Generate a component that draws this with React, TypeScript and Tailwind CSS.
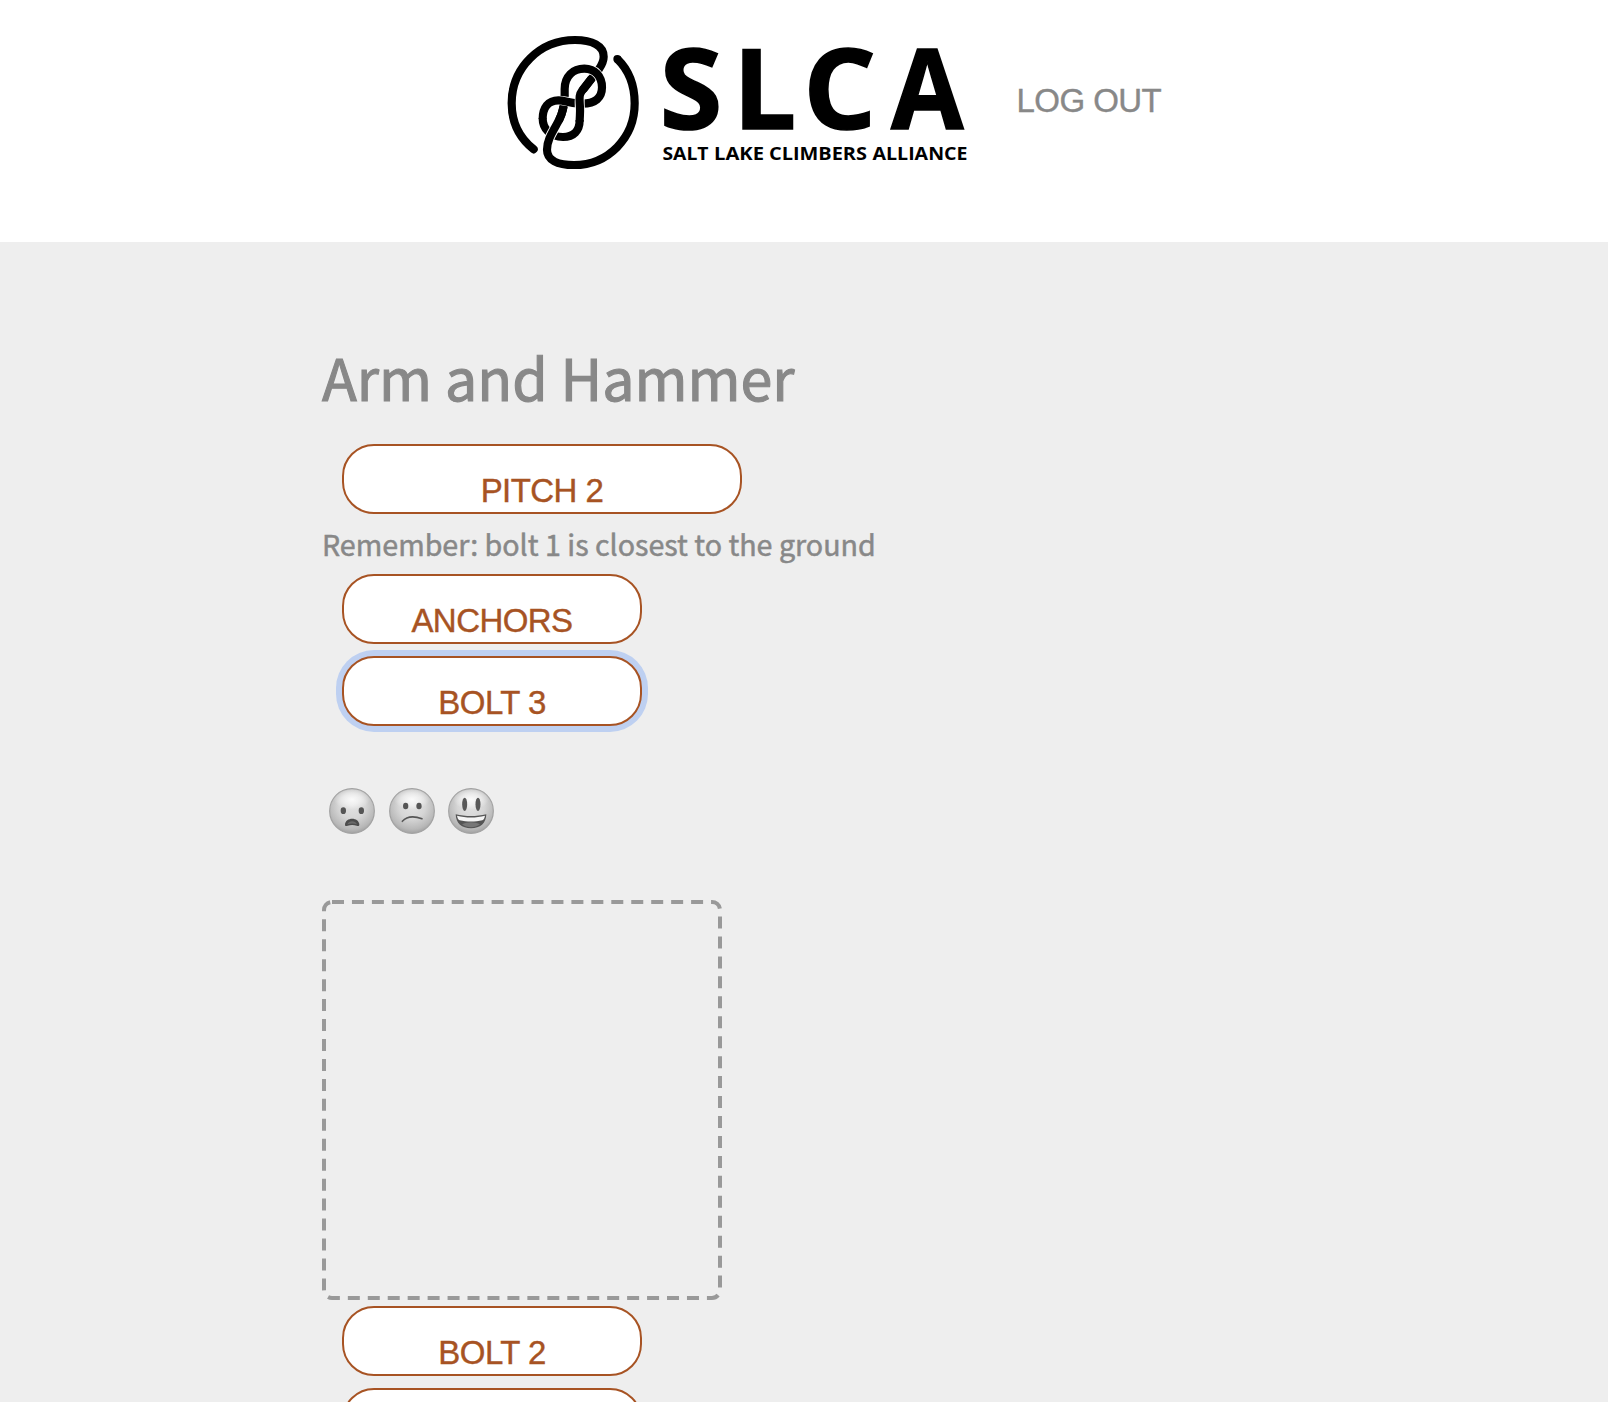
import React from "react";

function KnotMark() {
  return (
    <svg className="h-[155px] w-[160px] shrink-0" viewBox="0 0 480 465" fill="none" stroke="#000" strokeWidth="24.5">
      <path d="M116 373C74 340 50 292 50 235C50 128 134 45 240 45C292 45 326 62 326 95C326 108 320 120 312 132L266 192" strokeLinecap="round" />
      <path d="M254 285C254 318 236 336 204 336C166 336 143 312 143 280" />
      <path d="M209 205C209 240 203 264 192 286" />
      <path d="M209 212V192C209 154 234 131 268 131C300 131 321 154 321 187C321 218 302 236 262 236" stroke="#fff" strokeWidth="29" />
      <path d="M209 214V192C209 154 234 131 268 131C300 131 321 154 321 187C321 218 302 236 262 236" />
      <path d="M178 228C202 223 220 234 246 235" stroke="#fff" strokeWidth="30" />
      <path d="M143 282C143 248 160 226 190 226C208 226 224 234 246 235" />
      <path d="M257 208C252 218 254 232 255 262" stroke="#fff" strokeWidth="30" />
      <path d="M290 160L262 196C250 212 254 222 255 250C256 264 254 274 254 290" />
      <path d="M184 300C176 316 166 330 160 348" stroke="#fff" strokeWidth="30" />
      <path d="M206 242C203 264 196 280 184 300C166 332 156 350 156 374C156 404 186 420 237 420C340 420 419 338 419 235C419 182 400 134 367 102" />
      <circle cx="367" cy="102" r="12" fill="#000" stroke="none" />
    </svg>
  );
}

function Logo() {
  return (
    <div className="flex">
      <KnotMark />
      <svg className="h-[155px] w-[325px] overflow-visible" viewBox="655 25 325 155" fontFamily='"Open Sans", sans-serif' fontWeight="700">
        <g fontSize="112" stroke="#000" strokeWidth="1.6">
          <text x="659.8" y="129" textLength="62.5" lengthAdjust="spacingAndGlyphs">S</text>
          <text x="733" y="129">L</text>
          <text x="803.3" y="129" textLength="73" lengthAdjust="spacingAndGlyphs">C</text>
          <text x="891" y="129" textLength="72.5" lengthAdjust="spacingAndGlyphs">A</text>
        </g>
        <g fontSize="18.5">
          <text x="662.5" y="159.5" textLength="46" lengthAdjust="spacingAndGlyphs">SALT</text>
          <text x="714" y="159.5" textLength="50" lengthAdjust="spacingAndGlyphs">LAKE</text>
          <text x="769" y="159.5" textLength="98" lengthAdjust="spacingAndGlyphs">CLIMBERS</text>
          <text x="872.5" y="159.5" textLength="95" lengthAdjust="spacingAndGlyphs">ALLIANCE</text>
        </g>
      </svg>
    </div>
  );
}

function PillButton({ label, wide, focused }: { label?: string; wide?: boolean; focused?: boolean }) {
  return (
    <button
      className={
        "ml-5 flex h-[70px] shrink-0 items-start justify-center rounded-[32px] border-2 border-[#a75323] bg-white pt-[27px] font-['Liberation_Sans',Arial,sans-serif] text-[33px] leading-9 tracking-[-0.55px] text-[#a75323] outline-none [-webkit-text-stroke:0.4px_#a75323] " +
        (wide ? "w-[400px] " : "w-[300px] ") +
        (focused ? "shadow-[0_0_0_6px_#bed0f1]" : "")
      }
    >
      {label}
    </button>
  );
}

function Face({ kind }: { kind: "frown" | "confused" | "grin" }) {
  return (
    <svg className="size-[46px]" viewBox="0 0 138 138">
      <defs>
        <radialGradient id={"shade-" + kind} cx=".5" cy=".38" r=".66">
          <stop offset="0" stopColor="#e2e2e2" />
          <stop offset=".45" stopColor="#d6d6d6" />
          <stop offset=".8" stopColor="#b8b8b8" />
          <stop offset="1" stopColor="#989898" />
        </radialGradient>
        <radialGradient id={"gloss-" + kind}>
          <stop offset="0" stopColor="#fff" stopOpacity=".85" />
          <stop offset=".5" stopColor="#fff" stopOpacity=".5" />
          <stop offset="1" stopColor="#fff" stopOpacity="0" />
        </radialGradient>
      </defs>
      <circle cx="69" cy="69" r="67" fill={`url(#shade-${kind})`} stroke="#a2a2a2" strokeWidth="3.5" />
      <ellipse cx="69" cy="34" rx="54" ry="31" fill={`url(#gloss-${kind})`} />
      {kind === "frown" && (
        <>
          <ellipse cx="43" cy="68" rx="8" ry="10" fill="#555" />
          <ellipse cx="97" cy="68" rx="8" ry="10" fill="#555" />
          <path d="M48 110C49 86 90 86 91 110C91 115 86 114 83 113C74 110 65 110 56 113C52 115 48 115 48 110Z" fill="#4c4c4c" />
          <path d="M55 109C60 97 79 97 84 109C75 106 65 106 55 109Z" fill="#6a6a6a" />
        </>
      )}
      {kind === "confused" && (
        <>
          <ellipse cx="50" cy="54" rx="8" ry="10" fill="#555" />
          <ellipse cx="90" cy="54" rx="8" ry="10" fill="#555" />
          <path d="M40 100C54 84 76 84 99 92" fill="none" stroke="#555" strokeWidth="4.5" strokeLinecap="round" />
        </>
      )}
      {kind === "grin" && (
        <>
          <ellipse cx="50" cy="49" rx="7.5" ry="20" fill="#585858" />
          <ellipse cx="90" cy="49" rx="7.5" ry="20" fill="#585858" />
          <path d="M23 79C52 86 86 86 115 79C114 106 97 121 69 121C41 121 24 106 23 79Z" fill="#555" />
          <path d="M27 83C54 90 84 90 111 83C110 90 107 95 103 97C82 102 56 102 35 97C31 95 28 90 27 83Z" fill="#f5f5f5" />
          <path d="M42 109C56 101 82 101 96 109C82 121 56 121 42 109Z" fill="#777" />
        </>
      )}
    </svg>
  );
}

export default function App() {
  return (
    <div className="flex h-[1402px] flex-col overflow-hidden bg-[#eee] font-['Noto_Sans_CJK_JP','Noto_Sans',sans-serif] text-[#888]">
      <header className="flex h-[242px] shrink-0 items-start bg-white pt-[25px] pl-[495px]">
        <Logo />
        <a className="mt-[58px] ml-[36.5px] font-['Liberation_Sans',Arial,sans-serif] text-[33px] leading-9 tracking-[-0.55px] whitespace-nowrap [-webkit-text-stroke:0.4px_#888]">LOG OUT</a>
      </header>
      <main className="flex flex-col items-start pt-[103px] pl-[322px]">
        <h1 className="h-[99px] text-[57.3px] leading-[64px] whitespace-nowrap [-webkit-text-stroke:1.1px_#888]">Arm and Hammer</h1>
        <PillButton label="PITCH 2" wide />
        <p className="h-[60px] pt-[10px] text-[28.65px] leading-10 whitespace-nowrap [-webkit-text-stroke:0.5px_#888]">Remember: bolt 1 is closest to the ground</p>
        <PillButton label="ANCHORS" />
        <div className="mt-3">
          <PillButton label="BOLT 3" focused />
        </div>
        <div className="mt-[62px] ml-[7px] flex h-[46px] gap-[13.5px]">
          <Face kind="frown" />
          <Face kind="confused" />
          <Face kind="grin" />
        </div>
        <div className="mt-[66px] mb-[6px] size-[400px] shrink-0">
          <svg className="size-full" viewBox="0 0 400 400">
            <rect x="2" y="2" width="396" height="396" rx="8" fill="none" stroke="#999" strokeWidth="4" strokeDasharray="12 7.95" />
          </svg>
        </div>
        <div className="flex flex-col gap-3">
          <PillButton label="BOLT 2" />
          <PillButton />
        </div>
      </main>
    </div>
  );
}
